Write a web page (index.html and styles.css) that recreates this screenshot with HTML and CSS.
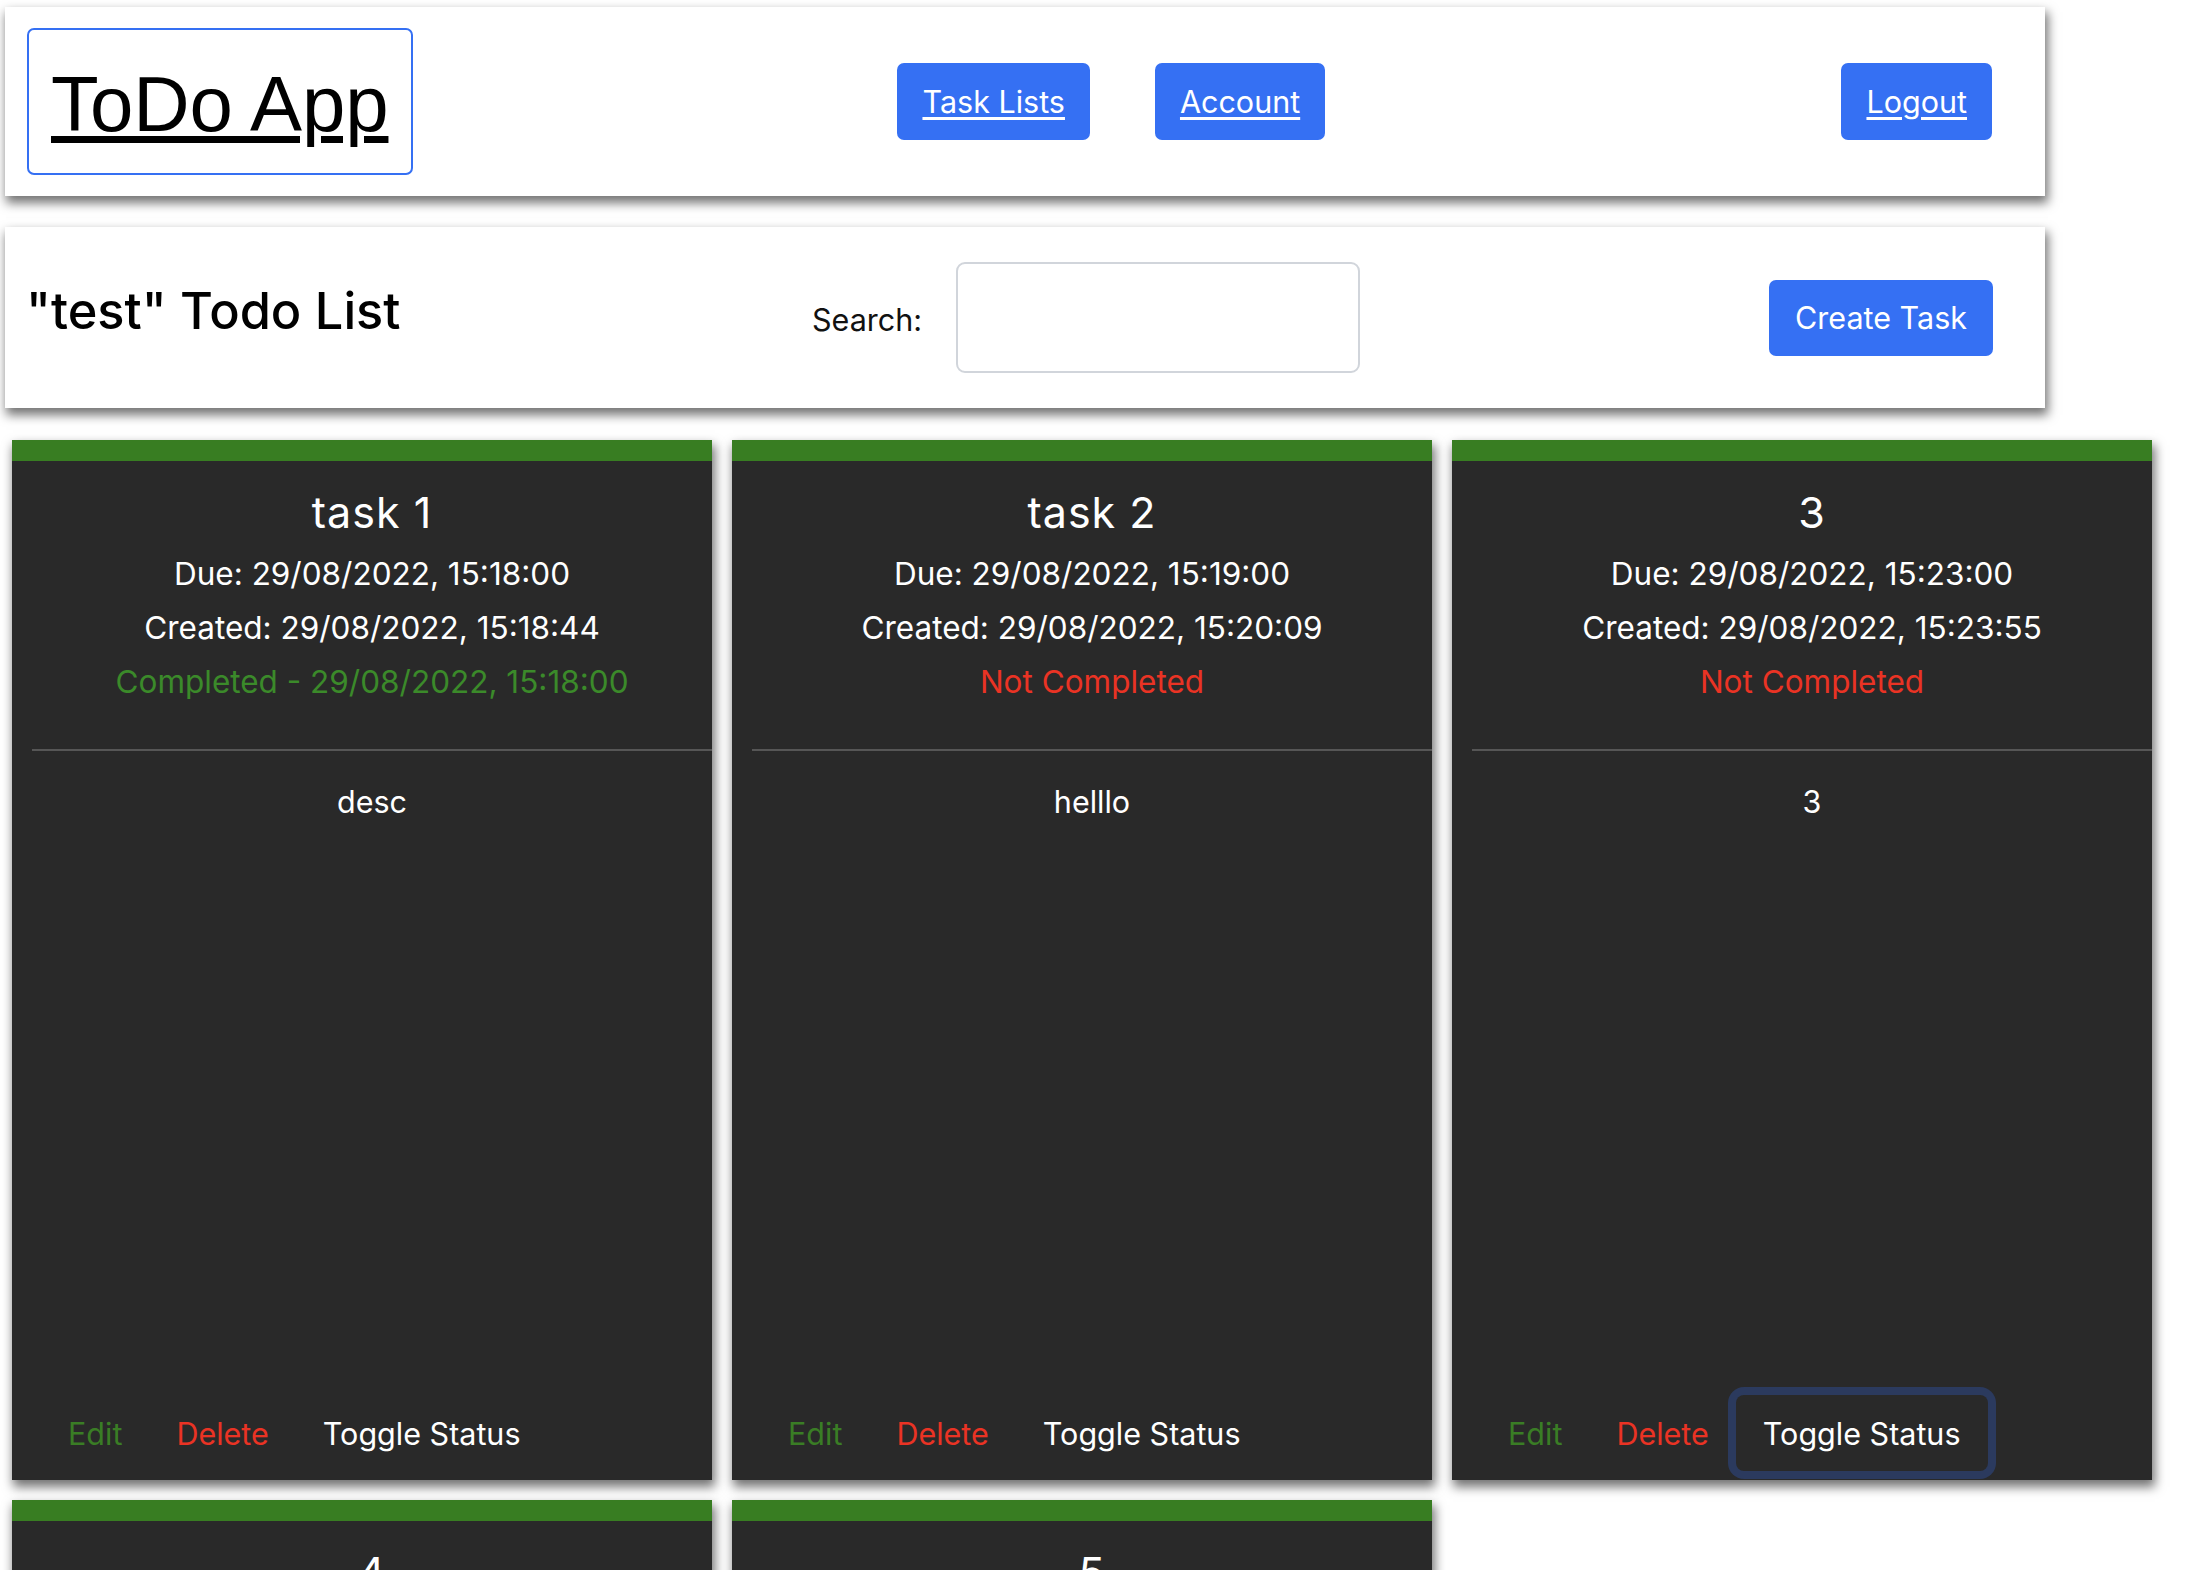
FILE: index.html
```html
<!DOCTYPE html>
<html lang="en">
<head>
<meta charset="utf-8">
<title>ToDo App</title>
<link rel="stylesheet" href="styles.css">
</head>
<body>
<div class="page">
  <header class="topbar">
    <div class="logo-box"><a href="#" class="logo">ToDo App</a></div>
    <nav class="nav">
      <a class="btn nav-btn" href="#">Task Lists</a>
      <a class="btn nav-btn" href="#">Account</a>
    </nav>
    <a class="btn nav-btn logout" href="#">Logout</a>
  </header>

  <section class="listbar">
    <h1 class="list-title">"test" Todo List</h1>
    <label class="search-label" for="search">Search:</label>
    <input class="search-input" id="search" type="text">
    <button class="btn create-btn" type="button">Create Task</button>
  </section>

  <main class="grid">
    <article class="card">
      <div class="card-body">
        <h2 class="card-title">task 1</h2>
        <p class="meta">Due: 29/08/2022, 15:18:00</p>
        <p class="meta">Created: 29/08/2022, 15:18:44</p>
        <p class="meta status done">Completed - 29/08/2022, 15:18:00</p>
        <hr class="sep">
        <p class="desc">desc</p>
      </div>
      <div class="card-actions">
        <button class="act edit" type="button">Edit</button>
        <button class="act delete" type="button">Delete</button>
        <button class="act toggle" type="button">Toggle Status</button>
      </div>
    </article>

    <article class="card">
      <div class="card-body">
        <h2 class="card-title">task 2</h2>
        <p class="meta">Due: 29/08/2022, 15:19:00</p>
        <p class="meta">Created: 29/08/2022, 15:20:09</p>
        <p class="meta status pending">Not Completed</p>
        <hr class="sep">
        <p class="desc">helllo</p>
      </div>
      <div class="card-actions">
        <button class="act edit" type="button">Edit</button>
        <button class="act delete" type="button">Delete</button>
        <button class="act toggle" type="button">Toggle Status</button>
      </div>
    </article>

    <article class="card">
      <div class="card-body">
        <h2 class="card-title">3</h2>
        <p class="meta">Due: 29/08/2022, 15:23:00</p>
        <p class="meta">Created: 29/08/2022, 15:23:55</p>
        <p class="meta status pending">Not Completed</p>
        <hr class="sep">
        <p class="desc">3</p>
      </div>
      <div class="card-actions">
        <button class="act edit" type="button">Edit</button>
        <button class="act delete" type="button">Delete</button>
        <button class="act toggle focused" type="button">Toggle Status</button>
      </div>
    </article>

    <article class="card">
      <div class="card-body">
        <h2 class="card-title">4</h2>
        <p class="meta">Due: 29/08/2022, 15:24:00</p>
        <p class="meta">Created: 29/08/2022, 15:24:12</p>
        <p class="meta status pending">Not Completed</p>
        <hr class="sep">
        <p class="desc">4</p>
      </div>
      <div class="card-actions">
        <button class="act edit" type="button">Edit</button>
        <button class="act delete" type="button">Delete</button>
        <button class="act toggle" type="button">Toggle Status</button>
      </div>
    </article>

    <article class="card">
      <div class="card-body">
        <h2 class="card-title">5</h2>
        <p class="meta">Due: 29/08/2022, 15:25:00</p>
        <p class="meta">Created: 29/08/2022, 15:25:30</p>
        <p class="meta status pending">Not Completed</p>
        <hr class="sep">
        <p class="desc">5</p>
      </div>
      <div class="card-actions">
        <button class="act edit" type="button">Edit</button>
        <button class="act delete" type="button">Delete</button>
        <button class="act toggle" type="button">Toggle Status</button>
      </div>
    </article>
  </main>
</div>
</body>
</html>
```

FILE: styles.css
```css
* { box-sizing: border-box; }

html, body {
  margin: 0;
  padding: 0;
  background: #ffffff;
}

body {
  font-family: Inter, "Noto Sans", sans-serif;
  font-size: 30.5px;
  color: #111111;
}

.page {
  padding: 7px 0 0 5px;
}

/* ---------- top bar ---------- */
.topbar {
  width: 2040px;
  height: 189px;
  display: flex;
  align-items: center;
  padding: 0 53px 0 22px;
  background: #ffffff;
  box-shadow: 2px 6px 10px 1px rgba(0, 0, 0, 0.55);
}

.logo-box {
  height: 147px;
  display: flex;
  align-items: center;
  padding: 0 23px 0 22px;
  border: 2px solid #3570f3;
  border-radius: 7px;
}

.logo {
  font-family: "Liberation Sans", Arial, sans-serif;
  font-size: 78px;
  letter-spacing: -0.1px;
  color: #000000;
  text-decoration: underline;
  text-decoration-thickness: 7px;
  text-underline-offset: 5px;
  line-height: 1;
  margin-top: 4px;
}

.nav {
  display: flex;
  gap: 65px;
  margin-left: 484px;
}

.btn {
  display: inline-flex;
  align-items: center;
  justify-content: center;
  background: #3570f3;
  color: #ffffff;
  border: 0;
  border-radius: 7px;
  font-family: Inter, "Noto Sans", sans-serif;
  font-size: 30.5px;
}

.nav-btn {
  height: 77px;
  padding: 0 25px;
  text-decoration: underline;
  text-decoration-thickness: 2.5px;
  text-underline-offset: 4px;
}

.logout {
  margin-left: auto;
}

/* ---------- list bar ---------- */
.listbar {
  width: 2040px;
  height: 181px;
  margin-top: 31px;
  display: flex;
  align-items: center;
  padding: 0 52px 0 21px;
  background: #ffffff;
  box-shadow: 2px 6px 10px 1px rgba(0, 0, 0, 0.55);
}

.list-title {
  flex: 0 0 786px;
  margin: 0 0 12px 0;
  font-size: 50.5px;
  font-weight: 500;
  line-height: 1.2;
  color: #000000;
}

.search-label {
  margin-top: 4px;
  color: #111111;
}

.search-input {
  width: 404px;
  height: 111px;
  margin-left: 34px;
  border: 2px solid #d1d5db;
  border-radius: 9px;
  background: #ffffff;
  font-family: Inter, sans-serif;
  font-size: 30px;
  outline: none;
}

.create-btn {
  margin-left: auto;
  height: 76px;
  padding: 0 26px;
  text-decoration: none;
}

/* ---------- cards ---------- */
.grid {
  display: grid;
  grid-template-columns: repeat(3, 700px);
  column-gap: 20px;
  row-gap: 20px;
  margin: 32px 0 0 7px;
}

.card {
  height: 1040px;
  display: flex;
  flex-direction: column;
  background: #292929;
  border-top: 21px solid #387d22;
  color: #ffffff;
  box-shadow: 2px 6px 10px 1px rgba(0, 0, 0, 0.55);
}

.card-body {
  flex: 1;
  padding: 19px 0 0 20px;
  text-align: center;
}

.card-title {
  margin: 0 0 3px 0;
  font-size: 43px;
  font-weight: 400;
  line-height: 64px;
  letter-spacing: 1px;
}

.meta {
  margin: 0;
  font-size: 31.5px;
  line-height: 54px;
}

.status.done { color: #3b8a2a; }
.status.pending { color: #ea3324; }

.sep {
  margin: 40px 0 0 0;
  height: 2px;
  border: 0;
  background: #565656;
}

.desc {
  margin: 24px 0 0 0;
  line-height: 54px;
}

.card-actions {
  display: flex;
  padding: 0 0 9px 29px;
}

.act {
  height: 76px;
  padding: 0 27px;
  background: transparent;
  border: 0;
  border-radius: 8px;
  font-family: Inter, "Noto Sans", sans-serif;
  font-size: 30.5px;
  cursor: pointer;
}

.act.edit { color: #3a7d25; }
.act.delete { color: #ea3324; }
.act.toggle { color: #ffffff; }

.act.focused {
  box-shadow: 0 0 0 8px #2b3a5e;
}
```
